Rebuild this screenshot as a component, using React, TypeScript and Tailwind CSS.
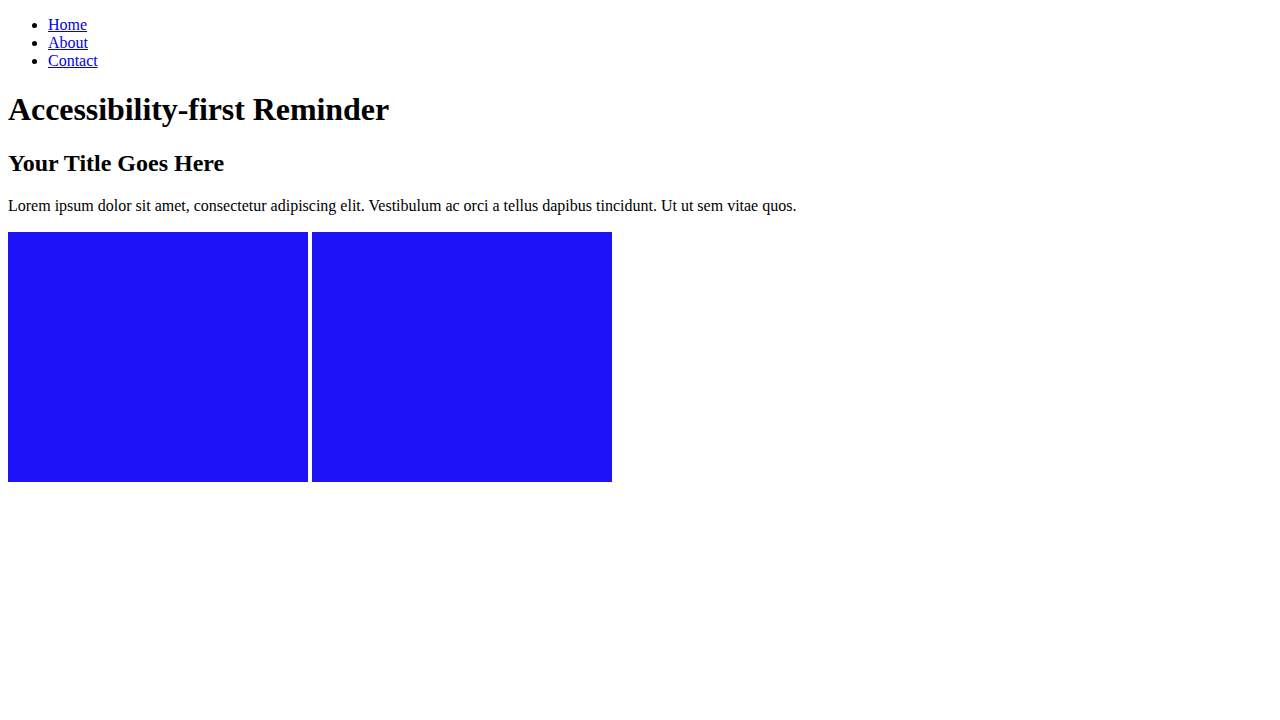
import React from "react";

export default function App() {
  return (
    <div className="min-h-[720px] bg-white px-2 py-4 text-black font-['Liberation_Serif',serif] text-[16px] leading-[normal]">
      <nav>
        <ul className="list-disc pl-10 m-0">
          <li><a href="#" className="text-[#0000ee] underline">Home</a></li>
          <li><a href="#" className="text-[#0000ee] underline">About</a></li>
          <li><a href="#" className="text-[#0000ee] underline">Contact</a></li>
        </ul>
      </nav>
      <h1 className="text-[32px] font-bold leading-[normal] mt-[21.44px] mb-[21.44px] tracking-[-0.07px]">Accessibility-first Reminder</h1>
      <h2 className="text-[24px] font-bold leading-[normal] mt-[19.92px] mb-[19.92px]">Your Title Goes Here</h2>
      <p className="mb-[17px]">
        Lorem ipsum dolor sit amet, consectetur adipiscing elit. Vestibulum ac orci a tellus dapibus tincidunt. Ut ut sem vitae quos.
      </p>
      <div className="flex gap-1">
        <div className="w-[300px] h-[250px] bg-[#1e12f8]" role="img" aria-label="Blue square 1" />
        <div className="w-[300px] h-[250px] bg-[#1e12f8]" role="img" aria-label="Blue square 2" />
      </div>
    </div>
  );
}
